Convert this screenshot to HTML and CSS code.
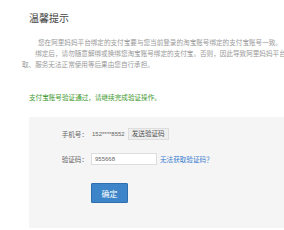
FILE: index.html
```html
<!DOCTYPE html>
<html lang="zh-CN">
<head>
<meta charset="utf-8">
<title>温馨提示</title>
<link rel="stylesheet" href="styles.css">
</head>
<body>
<div class="page">
  <div class="content">
    <h1 class="title">温馨提示</h1>
    <div class="tips">
      <p>您在阿里妈妈平台绑定的支付宝要与您当前登录的淘宝账号绑定的支付宝账号一致。</p>
      <p>绑定后，请勿随意解绑或换绑您淘宝账号绑定的支付宝。否则，因此导致阿里妈妈平台收入无法提取、服务无法正常使用等后果由您自行承担。</p>
    </div>
    <p class="notice">支付宝账号验证通过，请继续完成验证操作。</p>
    <div class="panel">
      <div class="row">
        <span class="label">手机号：</span>
        <div class="field">
          <span class="phone">152****8552</span>
          <button class="send-btn" type="button">发送验证码</button>
        </div>
      </div>
      <div class="row">
        <span class="label">验证码：</span>
        <div class="field">
          <input class="code-input" type="text" value="955668">
          <a class="help-link" href="#">无法获取验证码？</a>
        </div>
      </div>
      <div class="row actions">
        <span class="label"></span>
        <div class="field">
          <button class="submit-btn" type="button">确定</button>
        </div>
      </div>
    </div>
  </div>
</div>
</body>
</html>
```
FILE: styles.css
```css
html, body {
  margin: 0;
  padding: 0;
  background: #ffffff;
}

body {
  font-family: "Liberation Sans", "Noto Sans CJK SC", sans-serif;
  color: #666666;
}

.page {
  width: 284px;
  height: 230px;
  overflow: hidden;
}

.content {
  width: 340px;
  padding: 12px 0 0 22px;
}

.title {
  margin: 0 0 11px 7px;
  font-size: 10px;
  line-height: 14px;
  font-weight: normal;
  color: #444444;
}

.tips p {
  margin: 0;
  width: 300px;
  text-indent: 2em;
  font-size: 6.6px;
  line-height: 11px;
  color: #999999;
}

.tips p:first-child {
  text-indent: 16px;
}

.notice {
  margin: 22px 0 0 7px;
  font-size: 6.6px;
  line-height: 11px;
  color: #3f9a2f;
}

.panel {
  margin: 14px 0 0 7px;
  padding: 11px 0 25px 0;
  background: #f5f5f5;
  display: flex;
  flex-direction: column;
  gap: 13px;
}

.row {
  display: flex;
  align-items: center;
}

.label {
  width: 59px;
  text-align: right;
  font-size: 6.6px;
  line-height: 11px;
  color: #666666;
  flex-shrink: 0;
}

.field {
  margin-left: 3px;
  display: flex;
  align-items: center;
  gap: 3px;
}

.phone {
  font-size: 6px;
  line-height: 11px;
  color: #666666;
  margin-left: 1px;
}

.send-btn {
  margin: 0;
  height: 12px;
  padding: 0 3px;
  border: 1px solid #dddddd;
  background: #eeeeee;
  color: #555555;
  font-family: inherit;
  font-size: 6.6px;
  line-height: 10px;
  border-radius: 0;
}

.code-input {
  box-sizing: border-box;
  margin: 0;
  width: 66px;
  height: 12px;
  padding: 0 3px;
  border: 1px solid #dddddd;
  background: #ffffff;
  color: #666666;
  font-family: inherit;
  font-size: 6px;
  outline: none;
}

.help-link {
  font-size: 6.6px;
  line-height: 11px;
  color: #3a7fd0;
  text-decoration: none;
}

.actions {
  margin-top: 5px;
}

.submit-btn {
  margin: 0;
  width: 37px;
  height: 20px;
  padding: 0;
  border: 1px solid #2f6fae;
  background: #3d85c8;
  color: #ffffff;
  font-family: inherit;
  font-size: 8px;
  border-radius: 1px;
}
```
